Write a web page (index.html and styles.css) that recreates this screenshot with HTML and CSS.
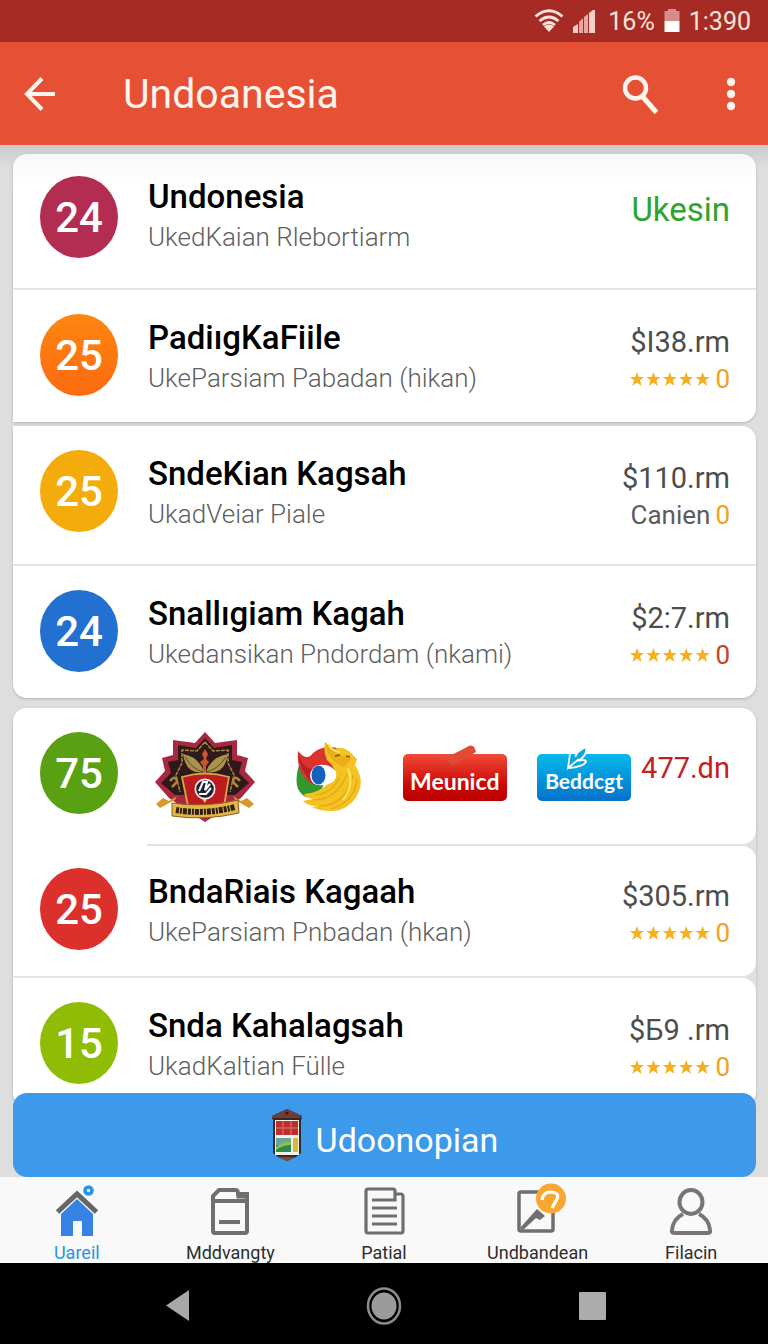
FILE: index.html
```html
<!DOCTYPE html>
<html lang="id">
<head>
<meta charset="utf-8">
<meta name="viewport" content="width=device-width, initial-scale=1">
<title>Undoanesia</title>
<link rel="stylesheet" href="styles.css">
</head>
<body>
<svg class="defs" width="0" height="0" aria-hidden="true">
  <symbol id="stars" viewBox="0 0 80 14">
    <g fill="#f6b01c">
      <path id="star" d="M7 0 8.800 5H14L10 8.200 11.600 14 7 10.600 2.400 14 4 8.200 0 5H5.200Z"/>
      <use href="#star" x="16.400"/><use href="#star" x="32.800"/><use href="#star" x="49.200"/><use href="#star" x="65.600"/>
    </g>
  </symbol>
</svg>
<div class="app">
  <div class="status">
    <svg width="30" height="24" viewBox="0 0 30 24" fill="none" stroke="#fbe3dc" stroke-width="2.800">
      <path d="M1.500 7.500Q15-4 28.500 7.500M5.500 12Q15 4 24.500 12M9 16Q15 11 21 16"/>
      <path d="M10 17.500Q15 13.500 20 17.500L15 23Z" fill="#fbe3dc" stroke="none"/>
    </svg>
    <svg width="22" height="23" viewBox="0 0 22 23" fill="#e9a79f">
      <path d="M0 17 5 14V23H0Z" fill="#f6cfc8"/><path d="M6 12 10 8V23H6ZM11 7 15 4V23H11Z"/><path d="M16 3 20 0H22V23H16Z" fill="#f6cfc8"/>
    </svg>
    <span class="status-percent">16%</span>
    <svg width="16" height="24" viewBox="0 0 16 24"><path d="M4 0h8v2h3.500v10H.5V2H4Z" fill="#d68d86"/><path d="M.5 12h15v11H.5Z" fill="#fff"/></svg>
    <span>1:390</span>
  </div>
  <header class="bar">
    <button class="icon-button" aria-label="Back">
      <svg width="32" height="34" viewBox="0 0 32 34" fill="none" stroke="#fff5ec" stroke-width="4"><path d="M18 1.500 3 17 18 32.500M3 17H31"/></svg>
    </button>
    <h1 class="bar-title">Undoanesia</h1>
    <button class="icon-button" aria-label="Search">
      <svg width="38" height="40" viewBox="0 0 38 40" fill="none" stroke="#fff5ec"><circle cx="14.500" cy="14" r="10.500" stroke-width="4.500"/><path d="M21 22 35.500 38.500" stroke-width="5"/></svg>
    </button>
    <button class="icon-button bar-more" aria-label="More">
      <svg width="10" height="34" viewBox="0 0 10 34" fill="#fff5ec"><circle cx="5" cy="5" r="4.200"/><circle cx="5" cy="17" r="4.200"/><circle cx="5" cy="29" r="4.200"/></svg>
    </button>
  </header>
  <main class="list">
    <section class="card card-first">
      <article class="row row-lead">
        <span class="badge plum">24</span>
        <div class="text"><h2 class="name">Undonesia</h2><p class="sub">UkedKaian Rlebortiarm</p></div>
        <a class="action" href="#">Ukesin</a>
      </article>
      <article class="row">
        <span class="badge orange">25</span>
        <div class="text"><h2 class="name">PadiıgKaFiile</h2><p class="sub">UkeParsiam Pabadan (hikan)</p></div>
        <div class="side"><span class="price">$I38.rm</span><span class="rating"><svg class="stars"><use href="#stars"/></svg>0</span></div>
      </article>
    </section>
    <section class="card card-second">
      <article class="row row-tall">
        <span class="badge amber">25</span>
        <div class="text"><h2 class="name">SndeKian Kagsah</h2><p class="sub">UkadVeiar Piale</p></div>
        <div class="side"><span class="price">$110.rm</span><span class="rating"><span class="note">Canien</span>0</span></div>
      </article>
      <article class="row">
        <span class="badge blue">24</span>
        <div class="text"><h2 class="name">Snallıgiam Kagah</h2><p class="sub">Ukedansikan Pndordam (nkami)</p></div>
        <div class="side"><span class="price">$2:7.rm</span><span class="rating rating-red"><svg class="stars"><use href="#stars"/></svg>0</span></div>
      </article>
    </section>
    <section class="card card-third">
      <article class="row row-logos">
        <span class="badge green">75</span>
        <div class="logos">
          <svg width="100" height="90" viewBox="0 0 100 90" role="img" aria-label="Crest">
            <path d="M50 0 60 11 82 8V23L93 26 90 39 100 50 86 66 70 77 50 90 30 77 14 66 0 50 10 39 7 26 18 23V8L40 11Z" fill="#a82840"/>
            <path d="M50 6 59 16 77 13V28L87 30 84 41 94 51 80 63 20 63 6 51 16 41 13 30 23 28V13L41 16Z" fill="#30191a"/>
            <path d="M50 10 58 19 73 18V31L79 43 75 60M50 10 42 19 27 18V31L21 43 25 60" fill="none" stroke="#a9873d" stroke-width="1.500" stroke-dasharray="4 1"/>
            <path d="M49 40Q31 43 28 22 44 25 49 40ZM51 40Q70 43 73 22 56 25 51 40Z" fill="#a8924c"/>
            <path d="M30 25Q38 38 49 40M71 25Q62 38 51 40" fill="none" stroke="#5f4b22"/>
            <path d="M50 17 53 22 51 27 54 30 51 34V42H48V34L45 30 49 27 47 22Z" fill="#c9562d"/>
            <path d="M15 49Q21 42 22 50L17 55M85 49Q79 42 78 50L83 55" fill="none" stroke="#a9873d" stroke-width="2.500"/>
            <path d="M27 45Q50 38 74 45L69 74H33Z" fill="#bd1b20" stroke="#d5a642" stroke-width="1.800"/>
            <circle cx="50" cy="57" r="10.500" fill="#f4efe8"/><circle cx="50" cy="57" r="8.800" fill="#1e2134"/>
            <path d="M44 59 48 50H52L50 58 55 52M44 62 51 62 56 56" stroke="#fff" stroke-width="2" fill="none"/>
            <path d="M47 67h5l-2 4Z" fill="#edcb75"/>
            <path d="M20 68 5 76 1 72 8 66 14 69 22 64ZM80 68 94 76 99 72 92 66 86 69 78 64Z" fill="#d7992d"/>
            <path d="M17 71Q50 76 83 68L84 81Q50 89 17 84Z" fill="#e3b449" stroke="#8f601d"/>
            <path d="M21 78Q50 83 80 75" stroke="#30200e" stroke-width="6" stroke-dasharray="3 1 2 1 4 1" fill="none"/>
          </svg>
          <svg class="logo-bird" width="68" height="72" viewBox="0 0 68 72" role="img" aria-label="Bird">
            <path d="M7 18Q0 37 4 48 12 62 25 54L34 34Z" fill="#30982d"/>
            <path d="M4 10Q13 21 19 12 32 2 48 9L56 19 42 35 24 31 20 44Q2 35 4 10Z" fill="#db3430"/>
            <path d="M4 10Q4 27 19 43L24 29Q7 29 4 10Z" fill="#b91f28"/>
            <path d="M31 1 39 9Q49 4 57 12L63 18 61 24Q70 38 65 50 61 63 46 69 30 72 18 66L24 65Q13 65 9 60L19 58Q11 57 10 53 25 52 35 42 44 33 38 24L33 19Q29 10 31 1Z" fill="#f4c321"/>
            <path d="M31 1Q41 14 58 18L50 26Q33 20 31 1Z" fill="#e9ae1c"/>
            <path d="M19 59Q43 59 53 33M25 65Q52 65 59 34M37 68Q61 61 63 38M22 54Q38 52 45 37" stroke="#e0a617" stroke-width="1.200" fill="none"/>
            <path d="M34 3Q39 11 46 11M54 28Q61 43 49 59" stroke="#ffe65e" stroke-width="2" fill="none"/>
            <path d="M41 15 46 14M52 15 56 16" stroke="#815309" stroke-width="1.500"/>
            <path d="M25 24Q36 22 42 31 44 42 30 44 17 46 16 35 17 25 25 24Z" fill="#fff"/><ellipse cx="24.500" cy="34" rx="7" ry="9.500" fill="#1261bd"/>
          </svg>
          <span class="tag tag-red">
            <svg class="tag-mark" width="34" height="24" viewBox="0 0 34 24"><path d="M1 14 26 1Q31-1 33 7L9 21Q5 23 1 14Z" fill="#e24b33"/><path d="M1 14 10 20 8 22Q4 21 1 14Z" fill="#d23c29"/></svg>
            Meunicd
          </span>
          <span class="tag tag-blue">
            <svg class="tag-mark" width="22" height="25" viewBox="0 0 22 25" fill="#0da5e0" stroke="#fff" stroke-width="1.800"><path d="M9 14Q9 7 20 2 22 10 12 16 20 14 20 17 17 22 2 23"/><path d="M4 9 2 23 13 14"/></svg>
            Beddcgt
          </span>
        </div>
        <span class="price price-red">477.dn</span>
      </article>
      <article class="row row-short">
        <span class="badge red">25</span>
        <div class="text"><h2 class="name">BndaRiais Kagaah</h2><p class="sub">UkeParsiam Pnbadan (hkan)</p></div>
        <div class="side"><span class="price">$305.rm</span><span class="rating"><svg class="stars"><use href="#stars"/></svg>0</span></div>
      </article>
      <article class="row row-last">
        <span class="badge lime">15</span>
        <div class="text"><h2 class="name">Snda Kahalagsah</h2><p class="sub">UkadKaltian Fülle</p></div>
        <div class="side"><span class="price">$Б9 .rm</span><span class="rating"><svg class="stars"><use href="#stars"/></svg>0</span></div>
      </article>
    </section>
    <button class="cta">
      <svg width="32" height="54" viewBox="0 0 32 54"><path d="M1 8 16 1 31 8V11H30V45L25 49 16 53 7 49 2 45V11H1Z" fill="#36272a"/><path d="M1 8 16 1 31 8V10H1Z" fill="#713c38"/><path d="M7 49H25L16 53Z" fill="#804d36"/><path d="M4 12H28V47H4Z" fill="#f2f1e7"/><path d="M5 13H27V27H5Z" fill="#bd2c2e"/><path d="M12 13V27M20 13V27M5 20H27" stroke="#df766d"/><path d="M5 30H20V44H5Z" fill="#2b8b4c"/><path d="M5 30H20V33Q11 38 5 37Z" fill="#63a6a4"/><path d="M5 39Q13 33 20 34V37Q12 37 5 42Z" fill="#90bf47"/><path d="M22 30H27V44H22Z" fill="#d5b83f"/><circle cx="16" cy="5" r="1.500" fill="#291b20"/></svg>
      <span class="cta-label">Udoonopian</span>
    </button>
  </main>
  <nav class="tabs">
    <a class="tab tab-active" href="#">
      <svg width="44" height="52" viewBox="0 0 44 52"><path d="M6 29 22 14 38 29V51H27V36H18V51H6Z" fill="#3683e4"/><path d="M2.500 27 22 9 41.500 27" fill="none" stroke="#666" stroke-width="5"/><circle cx="33.500" cy="5.500" r="3.500" fill="#dff2ff" stroke="#2196ee" stroke-width="3.500"/></svg>
      Uareil
    </a>
    <a class="tab" href="#">
      <svg width="44" height="52" viewBox="0 0 44 52" fill="none" stroke="#706e6e" stroke-width="4"><path d="M5 15V11L11 5H28Q30 5 30 9H39V46Q39 48 37 48H7Q5 48 5 46Z"/><path d="M5 16H39M11 37H32"/><path d="M30 7V12H37" stroke-width="3"/></svg>
      Mddvangty
    </a>
    <a class="tab" href="#">
      <svg width="44" height="52" viewBox="0 0 44 52" fill="none" stroke="#706e6e" stroke-width="3.200"><path d="M33 15V9H39Q41 9 41 12V46Q41 48 39 48H6Q4 48 4 46V6Q4 4 6 4H31Q33 4 33 6V15H10"/><path d="M10 23H35M10 31H35M10 39H35"/></svg>
      Patial
    </a>
    <a class="tab" href="#">
      <svg width="52" height="52" viewBox="0 0 52 52" overflow="visible"><rect x="7" y="7" width="34" height="39" rx="2" fill="none" stroke="#706e6e" stroke-width="3.500"/><path d="M8 43 25 24 33 31 28 35 24 33 11 45Z" fill="#706e6e"/><circle cx="39" cy="13.500" r="15" fill="#f9a730"/><path d="M30 15Q31 7 39 7 48 8 45 14L40 23" fill="none" stroke="#fff" stroke-width="3.200"/></svg>
      Undbandean
    </a>
    <a class="tab" href="#">
      <svg width="44" height="52" viewBox="0 0 44 52" fill="none" stroke="#777575" stroke-width="4"><ellipse cx="22" cy="17" rx="11.500" ry="12"/><path d="M14 29Q4 34 3 45 2 48 6 48H38Q42 48 41 45 40 34 30 29"/></svg>
      Filacin
    </a>
  </nav>
  <div class="system">
    <button class="system-button" aria-label="System back"><svg width="24" height="32" viewBox="0 0 24 32"><path d="M0 15.500 23 0V31Z" fill="#a9a7a7"/></svg></button>
    <button class="system-button" aria-label="Home"><svg width="36" height="38" viewBox="0 0 36 38"><ellipse cx="18" cy="19" rx="16" ry="17.500" fill="none" stroke="#8d8b8b" stroke-width="2.500"/><ellipse cx="18" cy="19" rx="12.500" ry="13.500" fill="#9c9a9a"/></svg></button>
    <button class="system-button" aria-label="Recent apps"><svg width="28" height="28" viewBox="0 0 28 28"><rect x="1" width="27" height="28" rx="1" fill="#adabab"/></svg></button>
  </div>
</div>
</body>
</html>
```
FILE: styles.css
```css
* { box-sizing: border-box; }
body { margin: 0; background: #dcdcdc; color: #000; font-family: Roboto, "Liberation Sans", sans-serif; }
h1, h2, p { margin: 0; font-weight: 400; }
button { border: 0; padding: 0; background: none; color: inherit; font: inherit; }
a { color: inherit; text-decoration: none; }
svg { display: block; flex: none; }
.defs { position: absolute; }
.app { display: flex; flex-direction: column; min-height: 100vh; }

.status { display: flex; align-items: center; justify-content: flex-end; gap: 9px; height: 42px; padding-right: 17px; background: #a72b25; color: #fbe3dc; font-size: 25px; }
.status-percent { padding-left: 4px; }
.bar { display: flex; align-items: center; height: 103px; padding: 0 32px 0 24px; background: #e65035; color: #fff5ec; }
.icon-button { display: flex; align-items: center; justify-content: center; }
.bar-title { flex: 1; padding-left: 67px; font-size: 41px; line-height: 48px; }
.bar-more { margin-left: 67px; }

.list { flex: 1; display: flex; flex-direction: column; padding: 9px 12px 0 13px; background: linear-gradient(#c9cbcd, #dedede 24px); }
.card { border-radius: 14px; background: #fff; box-shadow: 0 1px 3px #0003; }
.card-first { border-bottom-left-radius: 0; background: linear-gradient(#f7f7f7, #fff 32px); }
.card-second { margin-top: 4px; border-top-left-radius: 0; }
.row { display: grid; grid-template-columns: 78px 1fr auto; column-gap: 30px; align-items: start; min-height: 134px; padding: 24px 26px 0 27px; }
.row + .row { border-top: 2px solid #e4e4e4; }
.row-lead { padding-top: 22px; }
.row-tall { min-height: 138px; }
.row-logos { min-height: 136px; column-gap: 10px; }
.row-last { min-height: 128px; }
.card-third { display: flex; flex-direction: column; gap: 2px; margin-top: 10px; overflow: hidden; background: linear-gradient(90deg, #fff 134px, #e0e0e0 134px); }
.card-third .row { border: 0; border-radius: 0 14px 14px 0; background: #fff; }
.card-third .row-short { min-height: 130px; padding-top: 22px; box-shadow: 0 2px #e4e4e4; }
.badge { display: flex; align-items: center; justify-content: center; height: 82px; border-radius: 50%; color: #fff; font-size: 42px; font-weight: 500; }
.plum { background: #b32c51; }
.orange { background: linear-gradient(#ff8610, #fc6a10); }
.amber { background: #f4ac0c; }
.blue { background: #2270d0; }
.green { background: #59a012; }
.red { background: #dc302c; }
.lime { background: #8fbd06; }
.text { padding-top: 3px; }
.row-lead .text { padding-top: 0; }
.name { font-size: 33px; line-height: 41px; font-weight: 500; white-space: nowrap; }
.sub { font-size: 26px; line-height: 41px; color: #606060; font-weight: 300; white-space: nowrap; }
.action { padding-top: 12px; color: #2fa32f; font-size: 33px; line-height: 44px; }
.side { display: flex; flex-direction: column; align-items: flex-end; padding-top: 8px; }
.price { color: #4d4d4d; font-size: 29px; line-height: 40px; white-space: nowrap; }
.price-red { padding-top: 16px; color: #c32020; }
.rating { display: flex; align-items: center; gap: 5px; color: #efa31c; font-size: 26px; line-height: 34px; }
.rating-red { color: #cc4024; }
.stars { width: 80px; height: 14px; }
.note { color: #5c5c5c; }

.logos { display: flex; align-items: center; justify-content: space-between; padding-left: 27px; }
.logo-bird { margin-left: 15px; }
.tag { position: relative; display: flex; align-items: flex-end; justify-content: center; height: 47px; border-radius: 5px; padding-bottom: 6px; color: #fff; font-family: Lato, sans-serif; font-weight: 700; line-height: 28px; }
.tag-mark { position: absolute; top: -9px; left: 40px; }
.tag-red { width: 104px; margin-left: 16px; background: linear-gradient(#f04c36, #cc0808 65%, #b90000); font-size: 23px; }
.tag-blue { width: 94px; margin-left: 6px; background: linear-gradient(#07b9ec, #0672cb); font-size: 21px; }
.tag-blue .tag-mark { left: 29px; }

.cta { display: flex; align-items: center; justify-content: center; gap: 13px; height: 84px; margin-top: -13px; border-radius: 14px; background: #3d99e9; color: #fff; font-size: 34px; z-index: 1; }
.cta-label { padding-top: 10px; }
.tabs { display: grid; grid-template-columns: repeat(5, 1fr); min-height: 86px; padding: 8px 0 0; background: #f9f9f9; color: #2d2d2d; font-size: 18px; line-height: 21px; }
.tab { display: flex; flex-direction: column; align-items: center; gap: 5px; }
.tab-active { color: #2196e8; }
.system { display: flex; align-items: center; justify-content: space-between; height: 81px; padding: 4px 162px 0 166px; background: #000; }
.system-button { display: flex; }
```
